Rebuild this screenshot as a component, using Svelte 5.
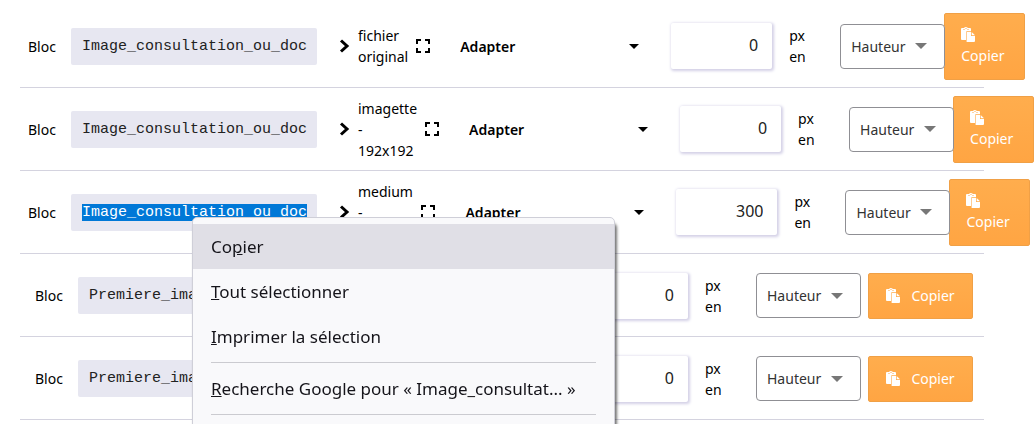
<script lang="ts">
	type Row = {
		id: number;
		code: string;
		size?: string;
		height: number;
		selected?: boolean;
	};

	const rows: Row[] = $state([
		{ id: 1, code: 'Image_consultation_ou_doc', size: 'fichier original', height: 0 },
		{ id: 2, code: 'Image_consultation_ou_doc', size: 'imagette - 192x192', height: 0 },
		{ id: 3, code: 'Image_consultation_ou_doc', size: 'medium - 300x300', height: 300, selected: true },
		{ id: 4, code: 'Premiere_image', height: 0 },
		{ id: 5, code: 'Premiere_image', height: 0 }
	]);

	// [before, access key, after]
	const editItems = [
		['Co', 'p', 'ier'],
		['', 'T', 'out sélectionner'],
		['', 'I', 'mprimer la sélection']
	];

	function copy(code: string) {
		navigator.clipboard?.writeText(code);
	}
</script>

{#snippet caret()}
	<svg class="caret" viewBox="0 0 12 6" aria-hidden="true"><path d="M0 0h12L6 6z" /></svg>
{/snippet}

<main class="list">
	{#each rows as row (row.id)}
		<div class="row" class:compact={!row.size}>
			<span class="kind">Bloc</span>
			<code class="code"><span class:selected={row.selected}>{row.code}</span></code>

			{#if row.size}
				<svg class="chevron" viewBox="0 0 11 14" aria-hidden="true">
					<path d="M2 1.5 8 7l-6 5.5" />
				</svg>
				<span class="size">{row.size}</span>
				<svg class="expand" viewBox="0 0 14 14" aria-hidden="true">
					<path d="M1 5V1h4M9 1h4v4M13 9v4H9M5 13H1V9" />
				</svg>
			{/if}

			<div class="picker fit">
				<select aria-label="Mode">
					<option>Adapter</option>
					<option>Recadrer</option>
				</select>
				{@render caret()}
			</div>

			<input
				class="amount"
				type="text"
				inputmode="numeric"
				aria-label="Dimension en pixels"
				bind:value={row.height}
			/>
			<span class="unit">px en</span>

			<div class="picker axis">
				<select aria-label="Côté">
					<option>Hauteur</option>
					<option>Largeur</option>
				</select>
				{@render caret()}
			</div>

			<button class="copy" type="button" onclick={() => copy(row.code)}>
				<svg viewBox="0 0 14 15" aria-hidden="true">
					<path d="M0 2q0-1 1-1h2q1.5-2 4 0h2q1 0 1 1v2.2H6q-1 0-1 1V13H1q-1 0-1-1z" />
					<path d="M5.6 5H10v4h4v5q0 1-1 1H5.6z" />
					<path d="M10.7 5 14 8.3h-3.3z" />
					<path class="clip" d="M2.5 2.5h1M4.5 1.5h1M6.5 2.5h1" />
				</svg>
				<span>Copier</span>
			</button>
		</div>
	{/each}
</main>

<div class="menu" role="menu">
	{#each editItems as [before, key, after], i}
		<button class="item" class:active={i === 0} type="button" role="menuitem">
			{before}<u>{key}</u>{after}
		</button>
	{/each}
	<hr />
	<button class="item" type="button" role="menuitem">
		<u>R</u>echerche Google pour « Image_consultat... »
	</button>
	<hr />
</div>

<style>
	:global(body) {
		background: #fff;
		overflow: hidden;
	}

	.list,
	.menu {
		font-family: 'Noto Sans', 'Open Sans', sans-serif;
	}

	.list {
		padding: 5px 51px 0 20px;
		font-size: 14px;
		line-height: 21px;
		color: #000;
	}

	.row {
		display: flex;
		align-items: center;
		box-sizing: border-box;
		min-height: 83px;
		padding: 7px 8px;
		border-bottom: 1px solid #d4d3df;
	}

	.row > * {
		flex-shrink: 0;
	}

	.row.compact {
		padding: 8px 11px 7px 15px;
	}

	.kind {
		width: 43px;
	}

	.code {
		box-sizing: border-box;
		width: 246px;
		padding: 8px 11px;
		border-radius: 2px;
		background: #e7e7f1;
		color: #222;
		font-family: 'Liberation Mono', monospace;
		font-size: 15px;
	}

	.selected {
		background: #0078d7;
		color: #fff;
	}

	.chevron {
		width: 11px;
		height: 14px;
		margin: 0 8px 0 22px;
		fill: none;
		stroke: #000;
		stroke-width: 3;
	}

	.size {
		width: min-content;
	}

	.expand {
		width: 14px;
		height: 14px;
		margin: 0 19px 0 8px;
		fill: none;
		stroke: #000;
		stroke-width: 2;
	}

	.picker {
		display: grid;
		align-items: center;
	}

	.picker select,
	.picker .caret {
		grid-area: 1 / 1;
	}

	.picker select {
		appearance: none;
		box-sizing: border-box;
		width: 100%;
		height: 45px;
		margin: 0;
		padding: 0 10px;
		border: 1px solid transparent;
		border-radius: 4px;
		background: #fff;
		color: #000;
		font: inherit;
	}

	.caret {
		justify-self: end;
		pointer-events: none;
		height: 6px;
	}

	.fit {
		width: 200px;
		margin-right: 22px;
	}

	.compact .fit {
		flex: 1;
		width: auto;
	}

	.picker.fit select {
		font-weight: 600;
	}

	.fit .caret {
		width: 10px;
		height: 5px;
		margin-right: 10px;
	}

	.amount {
		box-sizing: border-box;
		width: 101px;
		height: 46px;
		padding: 0 14px 2px;
		border: 0;
		border-radius: 2px;
		box-shadow: 1px 1px 3px 1px #d3d0e6;
		background: #fff;
		color: #222;
		font-family: inherit;
		font-size: 16px;
		text-align: right;
	}

	.unit {
		width: 20px;
		margin: 0 31px 0 17px;
	}

	.axis {
		position: relative;
		z-index: 1;
		width: 105px;
	}

	.picker.axis select {
		border-color: #8f8f94;
		color: #333;
	}

	.axis .caret {
		width: 12px;
		margin-right: 18px;
		fill: #777;
	}

	.copy {
		display: flex;
		flex-direction: column;
		align-items: flex-start;
		justify-content: center;
		box-sizing: border-box;
		width: 81px;
		height: 67px;
		margin-left: -1px;
		padding: 0 16px;
		border: 1px solid #f0a046;
		border-radius: 2px;
		background: linear-gradient(#ffad4d, #ffa543);
		color: #fff;
		font: inherit;
		cursor: pointer;
	}

	.copy svg {
		width: 14px;
		height: 15px;
		margin-bottom: 3px;
		fill: #fff;
	}

	.copy .clip {
		stroke: #ffa94a;
		stroke-width: 1;
	}

	.compact .copy {
		flex-direction: row;
		align-items: center;
		gap: 11px;
		width: 105px;
		height: 46px;
		margin-left: 7px;
	}

	.compact .copy svg {
		margin-bottom: 0;
	}

	.menu {
		position: fixed;
		top: 217px;
		left: 192px;
		box-sizing: border-box;
		width: 423px;
		padding: 6px 0 16px;
		border: 1px solid #cfcfd8;
		border-radius: 5px;
		background: #f9f9fb;
		box-shadow: 2px 6px 3px rgba(0, 0, 0, 0.55);
		z-index: 2;
	}

	.item {
		display: block;
		width: 100%;
		height: 45px;
		padding: 0 18px;
		border: 0;
		background: none;
		color: #15141a;
		font-family: inherit;
		font-size: 17px;
		text-align: left;
		white-space: nowrap;
	}

	.item.active {
		background: #e0dfe6;
	}

	.menu hr {
		height: 1px;
		margin: 3px 18px;
		border: 0;
		background: #cbcbd0;
	}
</style>
